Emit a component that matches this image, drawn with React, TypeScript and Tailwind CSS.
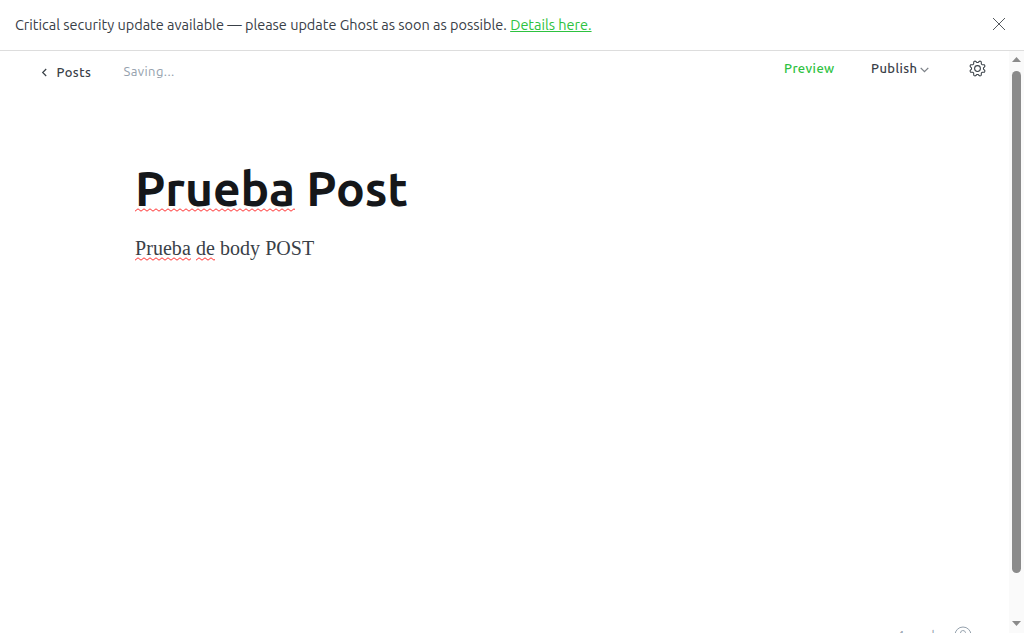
import React from "react";

function Squiggle({ width, className }: { width: number; className: string }) {
  let d = "M0 3.2";
  for (let x = 3, i = 0; x <= width + 2; x += 3, i++) d += ` L${x} ${i % 2 ? 3.2 : 0.8}`;
  return (
    <svg className={`absolute left-0 ${className}`} width={width} height="4" viewBox={`0 0 ${width} 4`}>
      <path d={d} fill="none" stroke="#f33" strokeWidth="1" />
    </svg>
  );
}

function Banner() {
  return (
    <div className="flex h-[51px] shrink-0 items-center justify-between border-b border-[#dddddd] pl-[15px] pr-[18px]">
      <p className="whitespace-nowrap text-[14.5px] leading-5 tracking-[-0.018px] text-[#394047]">
        Critical security update available — please update Ghost as soon as possible.{" "}
        <a className="text-[#2dc240] underline">Details here.</a>
      </p>
      <svg className="mb-[2px]" width="14" height="14" viewBox="0 0 14 14" fill="none" stroke="#54595e" strokeWidth="1">
        <path d="M1 1l12 12M13 1L1 13" />
      </svg>
    </div>
  );
}

function Gear() {
  const pts: string[] = [];
  for (let i = 0; i < 64; i++) {
    const a = (i / 64) * Math.PI * 2;
    const r = 6.9 + 0.95 * Math.tanh(2.4 * Math.cos(8 * a + Math.PI));
    pts.push(`${(8.5 + r * Math.cos(a)).toFixed(2)},${(8.5 + r * Math.sin(a)).toFixed(2)}`);
  }
  return (
    <svg width="17" height="17" viewBox="0 0 17 17" fill="none" stroke="#394047" strokeWidth="1.05">
      <polygon points={pts.join(" ")} strokeLinejoin="round" />
      <circle cx="8.5" cy="8.5" r="2.9" />
    </svg>
  );
}

function Toolbar() {
  return (
    <header className="flex h-[42px] pl-[41px] text-[13px] leading-5 tracking-[0.42px]">
      <div className="flex w-[82.4px] items-center font-medium text-[#394047]">
        <svg className="mr-[8.5px]" width="7" height="9" viewBox="0 0 7 9" fill="none" stroke="#394047" strokeWidth="1.2">
          <path d="M5.2 1L1.7 4.5l3.5 3.5" />
        </svg>
        Posts
      </div>
      <span className="mt-[10px] text-[#95a1ad]">Saving...</span>
      <div className="ml-auto mt-[7px] flex pr-[23.5px] font-medium">
        <span className="w-[87px] text-[#2dc240]">Preview</span>
        <span className="flex w-[97.5px] text-[#394047]">
          Publish
          <svg className="ml-[3px] mt-[9px]" width="9" height="6" viewBox="0 0 9 6" fill="none" stroke="#7c8187" strokeWidth="1.3">
            <path d="M0.7 0.9l3.8 3.8 3.8-3.8" />
          </svg>
        </span>
        <span className="pt-[2px]"><Gear /></span>
      </div>
    </header>
  );
}

export default function App() {
  return (
    <div className="flex h-[633px] w-full flex-col overflow-hidden bg-white font-['Ubuntu','Noto_Sans',sans-serif]">
      <Banner />
      <div className="flex min-h-0 flex-1">
        <main className="flex min-w-0 flex-1 flex-col">
          <Toolbar />
          <div className="flex-1 pl-[135px] pt-[67px]">
            <h1 className="whitespace-nowrap text-[48px] font-semibold leading-[56px] tracking-[-0.1px] text-[#15171a]">
              <span className="relative">Prueba<Squiggle width={160} className="bottom-[3px]" /></span> Post
            </h1>
            <p className="mt-[18px] whitespace-nowrap font-['Liberation_Serif',serif] text-[20px] leading-[28px] tracking-[0.05px] text-[#394047]">
              <span className="relative">Prueba<Squiggle width={56} className="bottom-[-2px]" /></span>{" "}
              <span className="relative">de<Squiggle width={19} className="bottom-[-2px]" /></span> body POST
            </p>
          </div>
          <footer className="flex h-[7px] shrink-0 justify-end overflow-hidden pr-[37px] text-[13px] leading-5 text-[#95a1ad]">
            <span className="-mt-px mr-[15px] tracking-[-0.6px]">4 words</span>
            <svg width="18" height="18" viewBox="0 0 18 18" fill="none" stroke="#95a1ad">
              <circle cx="9" cy="9" r="8" />
              <path d="M6.5 7a2.5 2.5 0 1 1 3.5 2.3Q9 9.8 9 11" />
            </svg>
          </footer>
        </main>
        <aside className="flex w-[15px] shrink-0 flex-col items-center bg-[#fafafa] pb-[7px] pt-[6px]">
          <svg width="9" height="5" viewBox="0 0 9 5" fill="#8b8b8b"><path d="M0 5L4.5 0 9 5z" /></svg>
          <div className="mt-[9px] h-[502px] w-[9px] rounded-full bg-[#8b8b8b]" />
          <svg className="mt-auto" width="9" height="5" viewBox="0 0 9 5" fill="#8b8b8b"><path d="M0 0h9L4.5 5z" /></svg>
        </aside>
      </div>
    </div>
  );
}
